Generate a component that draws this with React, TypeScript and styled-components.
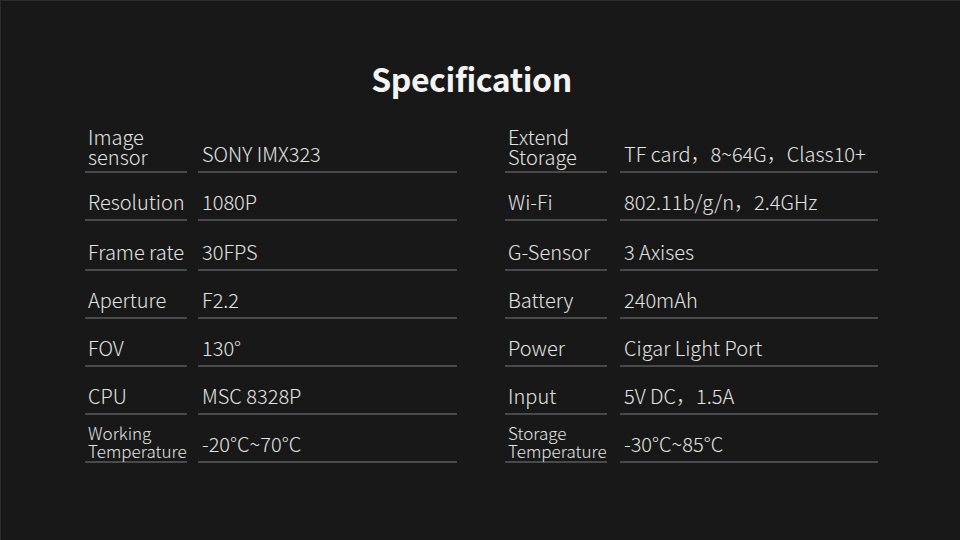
import React from "react";
import styled, { createGlobalStyle } from "styled-components";

const Global = createGlobalStyle`
  html, body { margin: 0; padding: 0; background: #181818; }
  body { font-family: "Noto Sans CJK SC", "Noto Sans", sans-serif; }
`;

const Page = styled.div`
  width: 960px;
  height: 540px;
  box-sizing: border-box;
  background: #181818;
  border-top: 1px solid #2c2c2c;
  border-left: 1px solid #2c2c2c;
  display: flex;
  flex-direction: column;
  align-items: center;
  padding-top: 52px;
`;

const Title = styled.h1`
  margin: 0 0 0 -18px;
  height: 52px;
  font-family: "Noto Sans CJK SC", "Noto Sans", sans-serif;
  font-weight: 700;
  font-size: 32px;
  line-height: 50px;
  color: #f4f4f4;
  letter-spacing: -0.4px;
`;

const Columns = styled.div`
  display: flex;
  gap: 48px;
  margin-left: 2px;
  margin-top: 20px;
`;

const Table = styled.div<{ $valueWidth: number; $gap: number }>`
  display: grid;
  grid-template-columns: 102px ${(p) => p.$valueWidth}px;
  grid-template-rows: 48px 48px 50px 48px 48px 48px 48px;
  column-gap: ${(p) => p.$gap}px;
`;

const Cell = styled.div`
  box-sizing: border-box;
  border-bottom: 2px solid #4a4a4c;
  display: flex;
  align-items: flex-end;
  padding-bottom: 5px;
  color: #e4e4e4;
  font-weight: 300;
  white-space: nowrap;
`;

const Label = styled(Cell)<{ $small?: boolean; $two?: boolean }>`
  padding-left: 3px;
  font-size: ${(p) => (p.$small ? "17px" : "20px")};
  line-height: ${(p) => (p.$small ? "18px" : p.$two ? "20px" : "24px")};
  padding-bottom: ${(p) => (p.$small ? "1px" : p.$two ? "4px" : "5px")};
`;

const Value = styled(Cell)`
  padding-left: 4px;
  font-size: 20px;
  line-height: 24px;
`;

type Row = { label: string[]; value: string; small?: boolean };

const left: Row[] = [
  { label: ["Image", "sensor"], value: "SONY IMX323" },
  { label: ["Resolution"], value: "1080P" },
  { label: ["Frame rate"], value: "30FPS" },
  { label: ["Aperture"], value: "F2.2" },
  { label: ["FOV"], value: "130°" },
  { label: ["CPU"], value: "MSC 8328P" },
  { label: ["Working", "Temperature"], value: "-20°C~70°C", small: true },
];

const right: Row[] = [
  { label: ["Extend", "Storage"], value: "TF card，8~64G，Class10+" },
  { label: ["Wi-Fi"], value: "802.11b/g/n，2.4GHz" },
  { label: ["G-Sensor"], value: "3 Axises" },
  { label: ["Battery"], value: "240mAh" },
  { label: ["Power"], value: "Cigar Light Port" },
  { label: ["Input"], value: "5V DC，1.5A" },
  { label: ["Storage", "Temperature"], value: "-30°C~85°C", small: true },
];

const Spec = ({ rows, valueWidth, gap }: { rows: Row[]; valueWidth: number; gap: number }) => (
  <Table $valueWidth={valueWidth} $gap={gap}>
    {rows.map((r, i) => (
      <React.Fragment key={i}>
        <Label $small={r.small} $two={r.label.length > 1}>
          <span>
            {r.label.map((l, j) => (
              <React.Fragment key={j}>
                {j > 0 && <br />}
                {l}
              </React.Fragment>
            ))}
          </span>
        </Label>
        <Value>{r.value}</Value>
      </React.Fragment>
    ))}
  </Table>
);

export default function App() {
  return (
    <>
      <Global />
      <Page>
        <Title>Specification</Title>
        <Columns>
          <Spec rows={left} valueWidth={259} gap={11} />
          <Spec rows={right} valueWidth={258} gap={13} />
        </Columns>
      </Page>
    </>
  );
}
